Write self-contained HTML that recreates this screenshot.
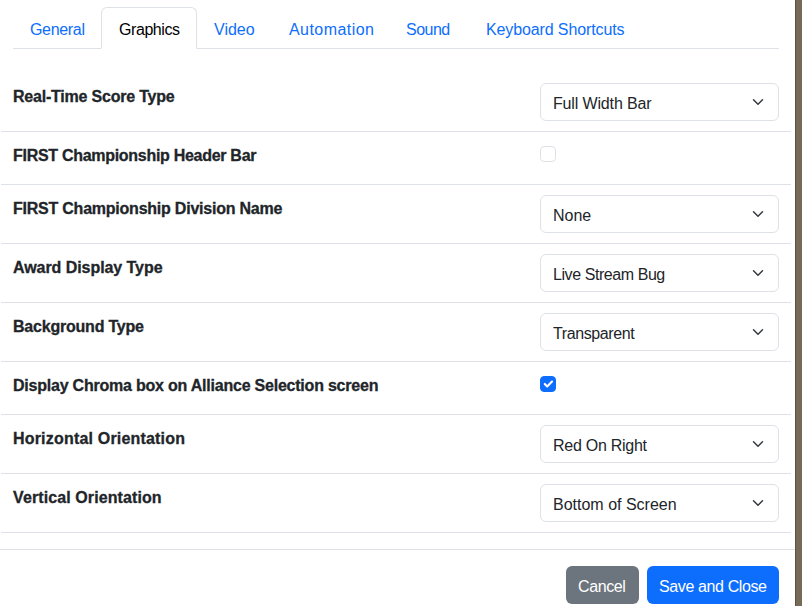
<!DOCTYPE html>
<html><head><meta charset="utf-8">
<style>
*{box-sizing:border-box;margin:0;padding:0}
html,body{width:802px;height:606px;overflow:hidden;background:#fff}
body{position:relative;font-family:"Liberation Sans",sans-serif;font-size:16px;line-height:24px;color:#212529}
.strip{position:absolute;left:795px;top:0;width:7px;height:606px;background:#766b58;border-left:1px solid #5c5243}
.navline{position:absolute;left:13px;top:48px;width:766px;height:1px;background:#dee2e6}
.acttab{position:absolute;left:101px;top:7px;width:96px;height:42px;border:1px solid #dee2e6;border-bottom:1px solid #fff;border-radius:6px 6px 0 0;background:#fff}
.tab{position:absolute;top:18px;white-space:nowrap;color:#0d6efd}
.tab.on{color:#000}
.rl{position:absolute;left:1px;width:790px;height:1px;background:#dee2e6}
.lab{position:absolute;left:13px;font-weight:bold;white-space:nowrap;-webkit-text-stroke:0.3px #212529}
.sel{position:absolute;left:540px;width:239px;height:38px;border:1px solid #dee2e6;border-radius:6px;background:#fff}
.sel .t{position:absolute;left:12px;top:8px;white-space:nowrap}
.sel svg{position:absolute;left:209px;top:12px}
.cb{position:absolute;left:540px;width:16px;height:16px;border:1px solid #dee2e6;border-radius:4px;background:#fff}
.cb.on{background:#0d6efd;border-color:#0d6efd}
.cb svg{position:absolute;left:-1px;top:-1px}
.foot{position:absolute;left:0;top:549px;width:795px;height:1px;background:#dee2e6}
.btn{position:absolute;top:566px;height:38px;border-radius:6px;color:#fff;white-space:nowrap}
.btn .t{position:absolute;top:9px}
</style></head><body>
<div class="strip"></div>
<div class="navline"></div>
<div class="acttab"></div>
<span class="tab t" style="left:30px;letter-spacing:-0.33px">General</span>
<span class="tab on t" style="left:119px;letter-spacing:-0.43px">Graphics</span>
<span class="tab t" style="left:214px;letter-spacing:0.00px">Video</span>
<span class="tab t" style="left:289px;letter-spacing:0.44px">Automation</span>
<span class="tab t" style="left:406px;letter-spacing:-0.50px">Sound</span>
<span class="tab t" style="left:486px;letter-spacing:-0.12px">Keyboard Shortcuts</span>

<span class="lab t" style="top:85px;letter-spacing:-0.21px">Real-Time Score Type</span>
<div class="sel" style="top:83px"><span class="t" style="letter-spacing:-0.15px">Full Width Bar</span><svg width="16" height="12" viewBox="0 0 16 16" preserveAspectRatio="xMidYMid meet"><path fill="none" stroke="#343a40" stroke-linecap="round" stroke-linejoin="round" stroke-width="2" d="m2 5 6 6 6-6"/></svg></div>
<div class="rl" style="top:131px"></div>

<span class="lab t" style="top:144px;letter-spacing:-0.29px">FIRST Championship Header Bar</span>
<div class="cb" style="top:146px"></div>
<div class="rl" style="top:184px"></div>

<span class="lab t" style="top:197px;letter-spacing:-0.23px">FIRST Championship Division Name</span>
<div class="sel" style="top:195px"><span class="t">None</span><svg width="16" height="12" viewBox="0 0 16 16"><path fill="none" stroke="#343a40" stroke-linecap="round" stroke-linejoin="round" stroke-width="2" d="m2 5 6 6 6-6"/></svg></div>
<div class="rl" style="top:243px"></div>

<span class="lab t" style="top:256px;letter-spacing:-0.06px">Award Display Type</span>
<div class="sel" style="top:254px"><span class="t" style="letter-spacing:-0.43px">Live Stream Bug</span><svg width="16" height="12" viewBox="0 0 16 16"><path fill="none" stroke="#343a40" stroke-linecap="round" stroke-linejoin="round" stroke-width="2" d="m2 5 6 6 6-6"/></svg></div>
<div class="rl" style="top:302px"></div>

<span class="lab t" style="top:315px;letter-spacing:-0.21px">Background Type</span>
<div class="sel" style="top:313px"><span class="t" style="letter-spacing:-0.40px">Transparent</span><svg width="16" height="12" viewBox="0 0 16 16"><path fill="none" stroke="#343a40" stroke-linecap="round" stroke-linejoin="round" stroke-width="2" d="m2 5 6 6 6-6"/></svg></div>
<div class="rl" style="top:361px"></div>

<span class="lab t" style="top:374px;letter-spacing:-0.22px">Display Chroma box on Alliance Selection screen</span>
<div class="cb on" style="top:376px"><svg width="16" height="16" viewBox="0 0 20 20"><path fill="none" stroke="#fff" stroke-linecap="round" stroke-linejoin="round" stroke-width="2.7" d="m6 10 3 3 6-6"/></svg></div>
<div class="rl" style="top:414px"></div>

<span class="lab t" style="top:427px;letter-spacing:0.19px">Horizontal Orientation</span>
<div class="sel" style="top:425px"><span class="t" style="letter-spacing:-0.27px">Red On Right</span><svg width="16" height="12" viewBox="0 0 16 16"><path fill="none" stroke="#343a40" stroke-linecap="round" stroke-linejoin="round" stroke-width="2" d="m2 5 6 6 6-6"/></svg></div>
<div class="rl" style="top:473px"></div>

<span class="lab t" style="top:486px;letter-spacing:0.10px">Vertical Orientation</span>
<div class="sel" style="top:484px"><span class="t">Bottom of Screen</span><svg width="16" height="12" viewBox="0 0 16 16"><path fill="none" stroke="#343a40" stroke-linecap="round" stroke-linejoin="round" stroke-width="2" d="m2 5 6 6 6-6"/></svg></div>
<div class="rl" style="top:532px"></div>

<div class="foot"></div>
<div class="btn" style="left:566px;width:73px;background:#6c757d"><span class="t" style="left:12px;letter-spacing:-0.4px">Cancel</span></div>
<div class="btn" style="left:647px;width:132px;background:#0d6efd"><span class="t" style="left:12px;letter-spacing:-0.38px">Save and Close</span></div>
</body></html>
